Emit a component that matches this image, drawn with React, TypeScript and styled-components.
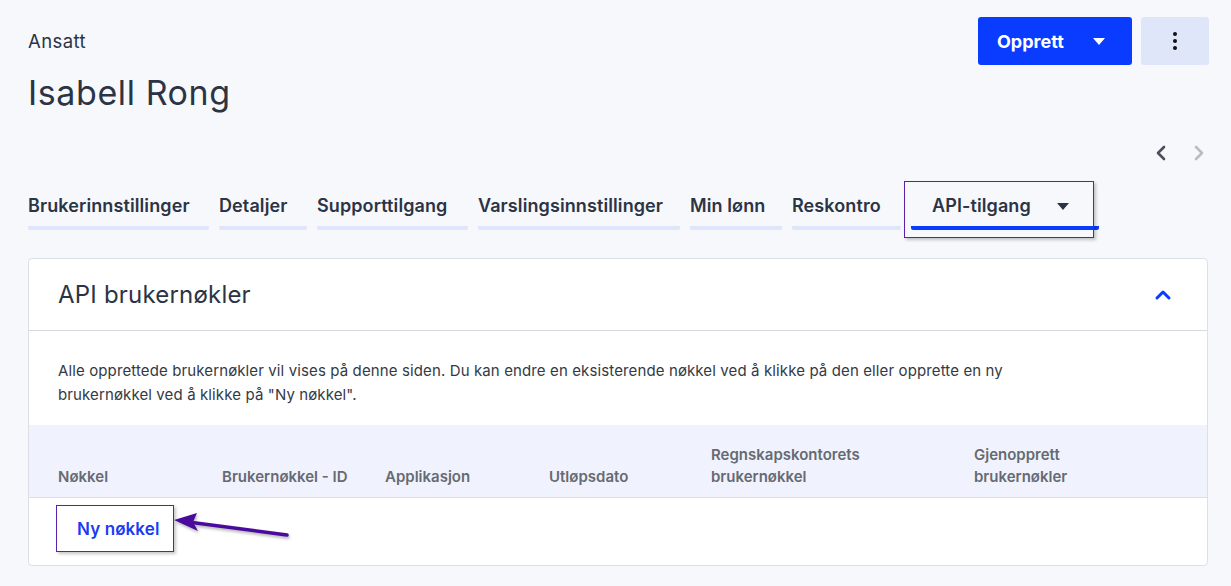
import React, { FC } from 'react';
import styled, { createGlobalStyle } from 'styled-components';
import { ChevronLeft, ChevronRight, ChevronUp } from 'lucide-react';

// Global page reset
const GlobalStyle = createGlobalStyle`
	html, body {
		margin: 0;
		padding: 0;
		background: #f7f8fc;
	}
	body {
		font-family: Inter, 'Noto Sans', sans-serif;
		color: #2b3445;
	}
	* {
		box-sizing: border-box;
	}
`;

const Page = styled.div`
	padding: 17px 22px 21px 28px;
	min-height: 586px;
`;

// Top header with title and action buttons
const HeaderRow = styled.div`
	display: flex;
	justify-content: space-between;
	align-items: flex-start;
`;

const TitleBlock = styled.div`
	display: flex;
	flex-direction: column;
	gap: 20px;
	padding-top: 12px;
`;

const Eyebrow = styled.div`
	font-size: 18.5px;
	line-height: 24px;
	letter-spacing: 0.4px;
	color: #2b3445;
`;

const Name = styled.h1`
	margin: 0;
	font-size: 34px;
	line-height: 40px;
	letter-spacing: 0.6px;
	font-weight: 400;
	color: #2b3445;
`;

const Actions = styled.div`
	display: flex;
	gap: 9px;
`;

const PrimaryButton = styled.button`
	display: flex;
	align-items: center;
	justify-content: space-between;
	width: 154px;
	height: 48px;
	padding: 0 27px 0 19px;
	border: none;
	border-radius: 3px;
	background: #0a3cff;
	color: #fff;
	font-family: inherit;
	font-size: 18px;
	font-weight: 700;
`;

const Caret = styled.span<{ color?: string }>`
	width: 0;
	height: 0;
	border-left: 6.5px solid transparent;
	border-right: 6.5px solid transparent;
	border-top: 7px solid ${(p) => p.color ?? '#fff'};
`;

const MoreButton = styled.button`
	display: flex;
	flex-direction: column;
	align-items: center;
	justify-content: center;
	gap: 2.5px;
	width: 68px;
	height: 48px;
	border: none;
	border-radius: 3px;
	background: #e0e6fa;
`;

const Dot = styled.span`
	width: 4.5px;
	height: 4.5px;
	border-radius: 50%;
	background: #111;
`;

// Pager chevrons
const PagerRow = styled.div`
	display: flex;
	justify-content: flex-end;
	gap: 14px;
	margin: 30px -2px 0 0;
	height: 20px;
	align-items: center;
`;

const PagerButton = styled.span<{ disabled?: boolean }>`
	display: flex;
	color: ${(p) => (p.disabled ? '#b9bcc4' : '#4a4f5a')};
`;

// Tabs
const TabsRow = styled.div`
	display: flex;
	gap: 10px;
	margin-top: 31px;
`;

const Tab = styled.div<{ active?: boolean; w: number }>`
	position: relative;
	flex: 0 0 ${(p) => p.w}px;
	display: flex;
	align-items: center;
	gap: 26px;
	padding: 0 0 8px ${(p) => (p.active ? '21px' : '0')};
	border-bottom: 4px solid ${(p) => (p.active ? '#0a3cff' : '#dfe5fa')};
	border-radius: 2px;
	font-size: 18px;
	line-height: 24px;
	letter-spacing: 0.1px;
	font-weight: 600;
	color: #2b3445;
	white-space: nowrap;
`;

// Purple annotation box drawn over content
const Highlight = styled.span<{ inset: string }>`
	position: absolute;
	inset: ${(p) => p.inset};
	border: 1.5px solid #5b22a8;
	box-shadow: 2px 2px 3px rgba(0, 0, 0, 0.22);
	pointer-events: none;
`;

// Card
const Card = styled.section`
	margin-top: 28px;
	margin-right: 1px;
	background: #fff;
	border: 1px solid #dcdfe6;
	border-radius: 4px;
`;

const CardHeader = styled.div`
	display: flex;
	align-items: center;
	justify-content: space-between;
	height: 72px;
	padding: 0 32px 0 29px;
	border-bottom: 1px solid #d6d9df;
`;

const CardTitle = styled.h2`
	margin: 0;
	font-size: 24px;
	font-weight: 400;
	letter-spacing: 0.2px;
	color: #2b3445;
`;

const CardBody = styled.div`
	padding-top: 28px;
`;

const Intro = styled.p`
	margin: 0 0 18px 29px;
	max-width: 1030px;
	font-size: 15px;
	line-height: 24px;
	letter-spacing: 0.12px;
	color: #343a44;
`;

const TableHead = styled.div`
	display: grid;
	grid-template-columns: 164px 163px 164px 162px 263px 1fr;
	align-items: end;
	height: 73px;
	padding: 0 0 9px 29px;
	background: #f0f3fd;
	border-bottom: 1px solid #dcdfe6;
`;

const HeadCell = styled.div`
	max-width: 170px;
	font-size: 15px;
	line-height: 22px;
	font-weight: 600;
	color: #666a72;
`;

const BodyRow = styled.div`
	position: relative;
	display: flex;
	align-items: flex-start;
	height: 67px;
	padding: 7px 0 0 27px;
`;

const NewKeyButton = styled.button`
	position: relative;
	height: 47px;
	padding: 0 15px 0 21px;
	border: none;
	background: transparent;
	color: #1a3cf5;
	font-family: inherit;
	font-size: 17px;
	font-weight: 600;
	letter-spacing: 0.1px;
`;

const Arrow = styled.svg`
	position: absolute;
	left: 141px;
	top: 12px;
	filter: drop-shadow(1px 2px 1.5px rgba(0, 0, 0, 0.3));
	pointer-events: none;
`;

const tabs = [
    { label: 'Brukerinnstillinger', width: 181 },
    { label: 'Detaljer', width: 88 },
    { label: 'Supporttilgang', width: 151 },
    { label: 'Varslingsinnstillinger', width: 202 },
    { label: 'Min lønn', width: 92 },
    { label: 'Reskontro', width: 109 },
];

const columns = ['Nøkkel', 'Brukernøkkel - ID', 'Applikasjon', 'Utløpsdato', 'Regnskapskontorets brukernøkkel', 'Gjenopprett brukernøkler'];

const App: FC = () => {
    return (
        <>
            <GlobalStyle />
            <Page>
                <HeaderRow>
                    <TitleBlock>
                        <Eyebrow>Ansatt</Eyebrow>
                        <Name>Isabell Rong</Name>
                    </TitleBlock>
                    <Actions>
                        <PrimaryButton>
                            Opprett
                            <Caret />
                        </PrimaryButton>
                        <MoreButton aria-label="Flere valg">
                            <Dot />
                            <Dot />
                            <Dot />
                        </MoreButton>
                    </Actions>
                </HeaderRow>

                <PagerRow>
                    <PagerButton>
                        <ChevronLeft size={24} strokeWidth={2.6} />
                    </PagerButton>
                    <PagerButton disabled>
                        <ChevronRight size={24} strokeWidth={2.6} />
                    </PagerButton>
                </PagerRow>

                <TabsRow>
                    {tabs.map((t) => (
                        <Tab key={t.label} w={t.width}>
                            {t.label}
                        </Tab>
                    ))}
                    <Tab active w={188}>
                        API-tilgang
                        <Caret color="#2b3445" />
                        <Highlight inset="-13px 5px -12px -7px" />
                    </Tab>
                </TabsRow>

                <Card>
                    <CardHeader>
                        <CardTitle>API brukernøkler</CardTitle>
                        <ChevronUp size={24} strokeWidth={3} color="#0a3cff" />
                    </CardHeader>
                    <CardBody>
                        <Intro>
                            Alle opprettede brukernøkler vil vises på denne siden. Du kan endre en eksisterende nøkkel ved å klikke på den eller opprette en ny
                            brukernøkkel ved å klikke på "Ny nøkkel".
                        </Intro>
                        <TableHead>
                            {columns.map((c) => (
                                <HeadCell key={c}>{c}</HeadCell>
                            ))}
                        </TableHead>
                        <BodyRow>
                            <NewKeyButton>
                                Ny nøkkel
                                <Highlight inset="0" />
                            </NewKeyButton>
                            <Arrow width="125" height="35" viewBox="0 0 125 35">
                                <line x1="22" y1="12.5" x2="117" y2="25" stroke="#4a0a9e" strokeWidth="3.5" strokeLinecap="round" />
                                <polygon points="4,10 27,3 23,12 28,21" fill="#4a0a9e" />
                            </Arrow>
                        </BodyRow>
                    </CardBody>
                </Card>
            </Page>
        </>
    );
};

export default App;
